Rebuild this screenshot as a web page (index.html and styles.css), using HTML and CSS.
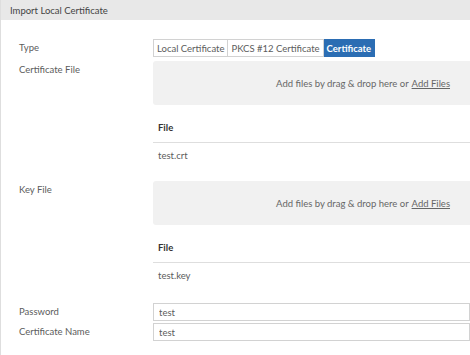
FILE: index.html
```html
<!DOCTYPE html>
<html lang="en">

<head>
    <meta charset="UTF-8">
    <meta name="viewport" content="width=device-width, initial-scale=1.0">
    <title>Import Local Certificate</title>
    <link rel="stylesheet" href="styles.css">
</head>

<body>
    <div class="panel">
        <div class="panel-header">
            <p class="title">Import Local Certificate</p>
        </div>
        <div class="form">
            <div class="row type-row">
                <label class="label">Type</label>
                <div class="segments">
                    <button class="segment">Local Certificate</button>
                    <button class="segment">PKCS #12 Certificate</button>
                    <button class="segment active">Certificate</button>
                </div>
            </div>
            <div class="row">
                <label class="label">Certificate File</label>
                <div class="field">
                    <div class="dropzone">Add files by drag &amp; drop here or <a class="add-files">Add Files</a></div>
                    <div class="files">
                        <div class="files-header">File</div>
                        <div class="files-row">test.crt</div>
                    </div>
                </div>
            </div>
            <div class="row">
                <label class="label">Key File</label>
                <div class="field">
                    <div class="dropzone">Add files by drag &amp; drop here or <a class="add-files">Add Files</a></div>
                    <div class="files">
                        <div class="files-header">File</div>
                        <div class="files-row">test.key</div>
                    </div>
                </div>
            </div>
            <div class="row input-row first">
                <label class="label">Password</label>
                <input class="input" type="text" value="test">
            </div>
            <div class="row input-row">
                <label class="label">Certificate Name</label>
                <input class="input" type="text" value="test">
            </div>
        </div>
    </div>
</body>

</html>
```

FILE: styles.css
```css
html,
body {
    margin: 0;
    overflow: hidden;
    font-family: Lato, "Open Sans", sans-serif;
    font-size: 9.5px;
    background-color: var(--background-color);
    color: var(--text-color);
}

:root {
    --text-color: #5c5c5c;
    --background-color: #fff;
    --header-color: #e8e8e8;
    --drop-color: #f1f1f1;
    --accent-color: #2b6db3;
    --border-color: #d2d2d2;
    --line-color: #dedede;
}

.panel {
    height: 355px;
    border-left: 1px solid var(--line-color);
}

.panel-header {
    background-color: var(--header-color);
    height: 20px;
    display: flex;
    align-items: center;
}

.panel-header .title {
    margin: 0 0 0 9px;
    color: #444;
}

.form {
    padding-top: 19px;
}

.row {
    display: grid;
    grid-template-columns: 152px 1fr;
    margin-bottom: 4px;
}

.row .label {
    padding-left: 18px;
    line-height: 14px;
    padding-top: 2px;
}

.segments {
    display: flex;
}

.segment {
    font-family: inherit;
    font-size: 9.5px;
    color: var(--text-color);
    background: #fff;
    border: 1px solid var(--border-color);
    border-left: none;
    height: 18px;
    padding: 0 3px;
    cursor: pointer;
}

.segment:first-child {
    border-left: 1px solid var(--border-color);
}

.segment.active {
    background-color: var(--accent-color);
    border-color: var(--accent-color);
    color: #fff;
    font-weight: bold;
}

.dropzone {
    background-color: var(--drop-color);
    border-radius: 3px 0 0 3px;
    height: 44px;
    display: flex;
    align-items: center;
    justify-content: flex-end;
    padding-right: 20px;
    color: #666;
}

.dropzone .add-files {
    text-decoration: underline;
    margin-left: 3px;
    cursor: pointer;
}

.files {
    margin-top: 9px;
    margin-bottom: 9px;
}

.files-header {
    font-weight: bold;
    color: #333;
    height: 28px;
    line-height: 28px;
    padding-left: 5px;
    border-bottom: 1px solid var(--line-color);
}

.files-row {
    height: 25px;
    line-height: 25px;
    padding-left: 5px;
}

.input-row {
    margin-bottom: 2px;
}

.input-row.first {
    margin-top: 6px;
}

.input {
    font-family: inherit;
    font-size: 9.5px;
    color: var(--text-color);
    border: 1px solid var(--border-color);
    height: 18px;
    box-sizing: border-box;
    padding: 0 5px;
    width: 100%;
}
```
